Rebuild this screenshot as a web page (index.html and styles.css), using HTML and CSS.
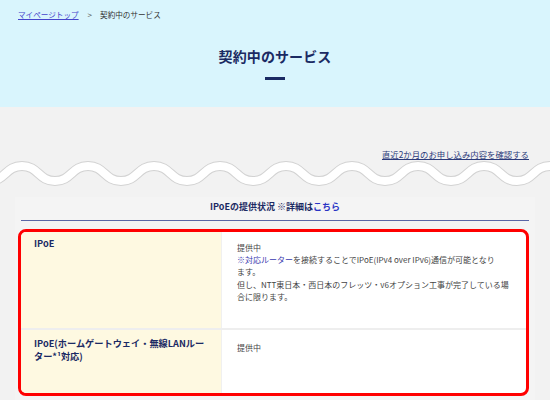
FILE: index.html
```html
<!DOCTYPE html>
<html lang="ja">
<head>
<meta charset="utf-8">
<title>契約中のサービス</title>
<link rel="stylesheet" href="styles.css">
</head>
<body>
<header class="hero">
  <nav class="crumbs">
    <a href="#" class="crumb-link">マイページトップ</a>
    <span class="crumb-sep">&gt;</span>
    <span class="crumb-current">契約中のサービス</span>
  </nav>
  <h1 class="title">契約中のサービス</h1>
  <div class="title-bar"></div>
</header>

<div class="history">
  <a href="#" class="history-link">直近2か月のお申し込み内容を確認する</a>
</div>

<svg class="wave" viewBox="0 0 550 30" preserveAspectRatio="none" aria-hidden="true">
  <path class="wave-shadow" d="M -44 8 C -27.5 8 -27.5 23 -11 23 S 5.5 8 22 8 S 38.5 23 55 23 S 71.5 8 88 8 S 104.5 23 121 23 S 137.5 8 154 8 S 170.5 23 187 23 S 203.5 8 220 8 S 236.5 23 253 23 S 269.5 8 286 8 S 302.5 23 319 23 S 335.5 8 352 8 S 368.5 23 385 23 S 401.5 8 418 8 S 434.5 23 451 23 S 467.5 8 484 8 S 500.5 23 517 23 S 533.5 8 550 8 S 566.5 23 583 23 S 599.5 8 616 8"/>
  <path class="wave-line" d="M -44 8 C -27.5 8 -27.5 23 -11 23 S 5.5 8 22 8 S 38.5 23 55 23 S 71.5 8 88 8 S 104.5 23 121 23 S 137.5 8 154 8 S 170.5 23 187 23 S 203.5 8 220 8 S 236.5 23 253 23 S 269.5 8 286 8 S 302.5 23 319 23 S 335.5 8 352 8 S 368.5 23 385 23 S 401.5 8 418 8 S 434.5 23 451 23 S 467.5 8 484 8 S 500.5 23 517 23 S 533.5 8 550 8 S 566.5 23 583 23 S 599.5 8 616 8"/>
</svg>

<section class="panel">
  <h2 class="section-title">IPoEの提供状況 ※詳細は<a href="#" class="here">こちら</a></h2>
  <div class="status-box">
    <div class="row">
      <div class="cell-head">IPoE</div>
      <div class="cell-body">
        <p>提供中<br><a href="#" class="note-link">※対応ルーター</a>を接続することでIPoE(IPv4 over IPv6)通信が可能となり<span class="nowrap">ます。</span></p>
        <p>但し、NTT東日本・西日本のフレッツ・v6オプション工事が完了している場合に限ります。</p>
      </div>
    </div>
    <div class="row row-last">
      <div class="cell-head">IPoE(ホームゲートウェイ・無線LANルーター*¹対応)</div>
      <div class="cell-body">
        <p>提供中</p>
      </div>
    </div>
  </div>
</section>
</body>
</html>
```

FILE: styles.css
```css
* { box-sizing: border-box; }

html, body {
  margin: 0;
  padding: 0;
}

body {
  width: 550px;
  height: 400px;
  overflow: hidden;
  background: #f2f2f2;
  font-family: "Noto Sans CJK JP", "Noto Sans", sans-serif;
  color: #333;
}

.hero {
  background: #d9f5fd;
  height: 107px;
  padding-top: 10px;
}

.crumbs {
  padding-left: 18px;
  font-size: 7.6px;
  line-height: 10px;
  height: 10px;
  display: flex;
  align-items: center;
}

.crumb-link {
  color: #4646cc;
  text-decoration: underline;
}

.crumb-sep {
  color: #555;
  margin: 0 8px 0 9px;
  font-size: 8px;
}

.crumb-current {
  color: #333;
}

.title {
  margin: 26px 0 0;
  text-align: center;
  font-size: 14px;
  line-height: 20px;
  font-weight: 700;
  color: #1b2a63;
  letter-spacing: 0.1px;
}

.title-bar {
  width: 20px;
  height: 3px;
  background: #1b2a63;
  margin: 11px auto 0;
}

.history {
  margin-top: 41px;
  padding-right: 21px;
  text-align: right;
  font-size: 8.4px;
  line-height: 12px;
}

.history-link {
  color: #2b3a7a;
  text-decoration: underline;
}

.wave {
  display: block;
  width: 550px;
  height: 30px;
  margin-top: -2px;
}

.wave-shadow {
  fill: none;
  stroke: #d2d2d2;
  stroke-width: 10;
}

.wave-line {
  fill: none;
  stroke: #ffffff;
  stroke-width: 8;
}

.panel {
  margin: 9px 15px 0;
  padding: 3px 6px 0;
  background: #f4f4f4;
  height: 220px;
}

.section-title {
  margin: 0;
  text-align: center;
  font-size: 9px;
  line-height: 14px;
  font-weight: 700;
  color: #1b2a63;
  padding-bottom: 6px;
  border-bottom: 1.5px solid #5a66a6;
}

.here {
  color: #2a33c4;
  text-decoration: none;
}

.status-box {
  margin: 7.5px 0 0 -3px;
  border: 3.5px solid #ff0000;
  border-radius: 8px;
  overflow: hidden;
  background: #fff;
}

.row {
  display: grid;
  grid-template-columns: 201px 1fr;
  border-bottom: 2px solid #eeeeee;
  min-height: 98px;
}

.row-last {
  border-bottom: none;
  min-height: 63px;
}

.cell-head {
  background: #fef9e1;
  padding: 5px 12px 8px 13px;
  font-size: 9.2px;
  line-height: 13px;
  font-weight: 700;
  color: #1b2a63;
  border-right: 1px solid #f0f0f0;
}

.row-last .cell-head {
  padding-top: 7px;
}

.cell-body {
  padding: 10px 12px 20px 15px;
  font-size: 8px;
  line-height: 12.4px;
  color: #444;
}

.row-last .cell-body {
  padding-top: 12px;
}

.cell-body p {
  margin: 0;
}

.nowrap {
  white-space: nowrap;
}

.note-link {
  color: #3a3ab0;
  text-decoration: none;
}
```
